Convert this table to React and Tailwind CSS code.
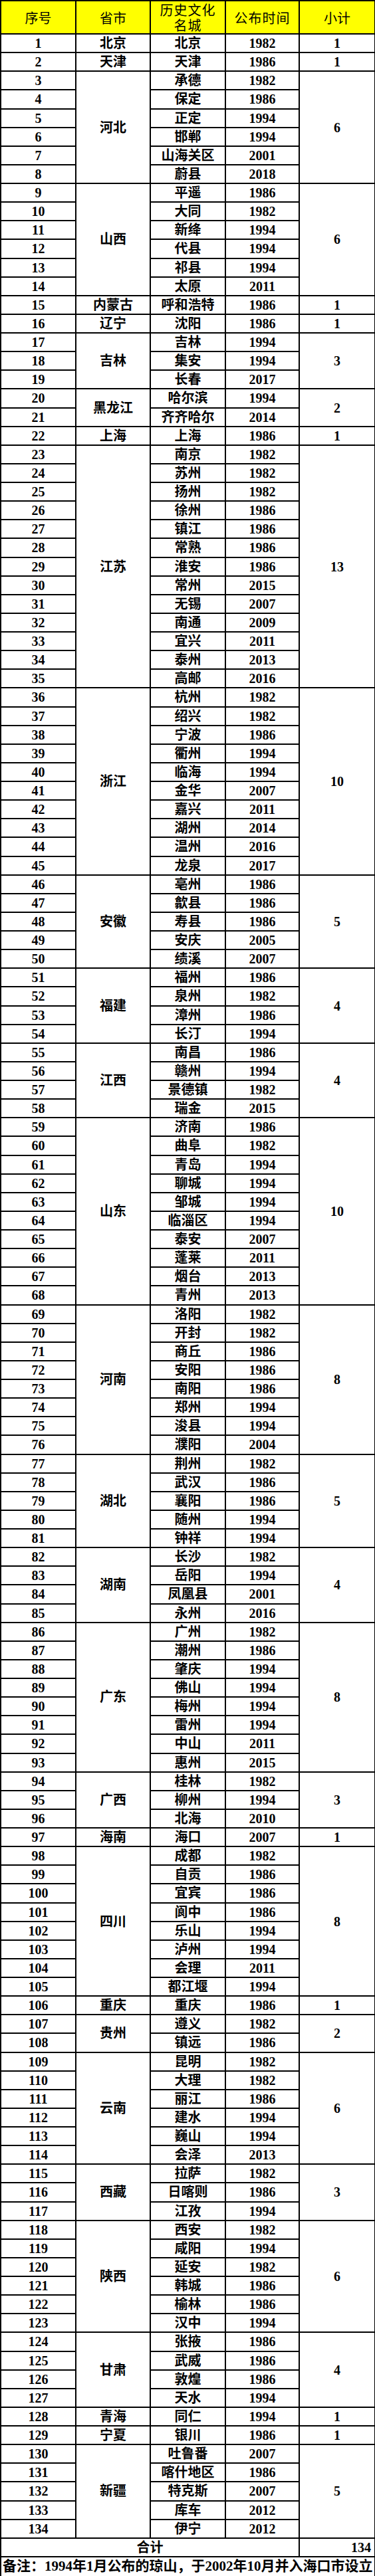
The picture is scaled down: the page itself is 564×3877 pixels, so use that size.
import React from "react";

const groups = [
  ["北京", [["北京", 1982]]],
  ["天津", [["天津", 1986]]],
  ["河北", [["承德", 1982], ["保定", 1986], ["正定", 1994], ["邯郸", 1994], ["山海关区", 2001], ["蔚县", 2018]]],
  ["山西", [["平遥", 1986], ["大同", 1982], ["新绛", 1994], ["代县", 1994], ["祁县", 1994], ["太原", 2011]]],
  ["内蒙古", [["呼和浩特", 1986]]],
  ["辽宁", [["沈阳", 1986]]],
  ["吉林", [["吉林", 1994], ["集安", 1994], ["长春", 2017]]],
  ["黑龙江", [["哈尔滨", 1994], ["齐齐哈尔", 2014]]],
  ["上海", [["上海", 1986]]],
  ["江苏", [["南京", 1982], ["苏州", 1982], ["扬州", 1982], ["徐州", 1986], ["镇江", 1986], ["常熟", 1986], ["淮安", 1986], ["常州", 2015], ["无锡", 2007], ["南通", 2009], ["宜兴", 2011], ["泰州", 2013], ["高邮", 2016]]],
  ["浙江", [["杭州", 1982], ["绍兴", 1982], ["宁波", 1986], ["衢州", 1994], ["临海", 1994], ["金华", 2007], ["嘉兴", 2011], ["湖州", 2014], ["温州", 2016], ["龙泉", 2017]]],
  ["安徽", [["亳州", 1986], ["歙县", 1986], ["寿县", 1986], ["安庆", 2005], ["绩溪", 2007]]],
  ["福建", [["福州", 1986], ["泉州", 1982], ["漳州", 1986], ["长汀", 1994]]],
  ["江西", [["南昌", 1986], ["赣州", 1994], ["景德镇", 1982], ["瑞金", 2015]]],
  ["山东", [["济南", 1986], ["曲阜", 1982], ["青岛", 1994], ["聊城", 1994], ["邹城", 1994], ["临淄区", 1994], ["泰安", 2007], ["蓬莱", 2011], ["烟台", 2013], ["青州", 2013]]],
  ["河南", [["洛阳", 1982], ["开封", 1982], ["商丘", 1986], ["安阳", 1986], ["南阳", 1986], ["郑州", 1994], ["浚县", 1994], ["濮阳", 2004]]],
  ["湖北", [["荆州", 1982], ["武汉", 1986], ["襄阳", 1986], ["随州", 1994], ["钟祥", 1994]]],
  ["湖南", [["长沙", 1982], ["岳阳", 1994], ["凤凰县", 2001], ["永州", 2016]]],
  ["广东", [["广州", 1982], ["潮州", 1986], ["肇庆", 1994], ["佛山", 1994], ["梅州", 1994], ["雷州", 1994], ["中山", 2011], ["惠州", 2015]]],
  ["广西", [["桂林", 1982], ["柳州", 1994], ["北海", 2010]]],
  ["海南", [["海口", 2007]]],
  ["四川", [["成都", 1982], ["自贡", 1986], ["宜宾", 1986], ["阆中", 1986], ["乐山", 1994], ["泸州", 1994], ["会理", 2011], ["都江堰", 1994]]],
  ["重庆", [["重庆", 1986]]],
  ["贵州", [["遵义", 1982], ["镇远", 1986]]],
  ["云南", [["昆明", 1982], ["大理", 1982], ["丽江", 1986], ["建水", 1994], ["巍山", 1994], ["会泽", 2013]]],
  ["西藏", [["拉萨", 1982], ["日喀则", 1986], ["江孜", 1994]]],
  ["陕西", [["西安", 1982], ["咸阳", 1994], ["延安", 1982], ["韩城", 1986], ["榆林", 1986], ["汉中", 1994]]],
  ["甘肃", [["张掖", 1986], ["武威", 1986], ["敦煌", 1986], ["天水", 1994]]],
  ["青海", [["同仁", 1994]]],
  ["宁夏", [["银川", 1986]]],
  ["新疆", [["吐鲁番", 2007], ["喀什地区", 1986], ["特克斯", 2007], ["库车", 2012], ["伊宁", 2012]]],
];

const cell = "border-2 border-black text-center align-middle p-0 leading-none";
const head = "border-2 border-black text-center align-middle p-0 font-normal leading-[25px]";

export default function App() {
  let n = 0;
  const rows = [];
  groups.forEach(([prov, cities]) => {
    cities.forEach(([city, year], i) => {
      n += 1;
      rows.push(
        <tr key={n} className="h-[28.125px]">
          <td className={cell}>{n}</td>
          {i === 0 && (
            <td className={cell} rowSpan={cities.length}>
              {prov}
            </td>
          )}
          <td className={cell}>{city}</td>
          <td className={cell}>{year}</td>
          {i === 0 && (
            <td className={cell} rowSpan={cities.length}>
              {cities.length}
            </td>
          )}
        </tr>
      );
    });
  });

  return (
    <div className="w-[564px] bg-white text-black font-['Liberation_Serif','Noto_Sans_CJK_SC',serif] font-bold text-[20px]">
      <table className="table-fixed border-collapse w-[563px]">
        <colgroup>
          <col className="w-[113px]" />
          <col className="w-[112px]" />
          <col className="w-[113px]" />
          <col className="w-[111px]" />
          <col className="w-[114px]" />
        </colgroup>
        <thead>
          <tr className="h-[50px] bg-[#ffff00] font-['Noto_Sans_CJK_SC',sans-serif] font-normal text-[20px]">
            <th className={head}>序号</th>
            <th className={head}>省市</th>
            <th className={head + " tracking-[1px]"}>
              <div className="leading-[23px]">历史文化</div>
              <div className="leading-[23px]">名城</div>
            </th>
            <th className={head + " tracking-[1px]"}>公布时间</th>
            <th className={head}>小计</th>
          </tr>
        </thead>
        <tbody>
          {rows}
          <tr className="h-[28px]">
            <td className={cell} colSpan={4}>
              合计
            </td>
            <td className={cell + " text-right pr-[5px]"}>134</td>
          </tr>
          <tr className="h-[30px]">
            <td className={cell + " text-left pl-[2px] whitespace-nowrap text-[21px]"} colSpan={5}>
              备注：1994年1月公布的琼山，于2002年10月并入海口市设立
            </td>
          </tr>
        </tbody>
      </table>
    </div>
  );
}
